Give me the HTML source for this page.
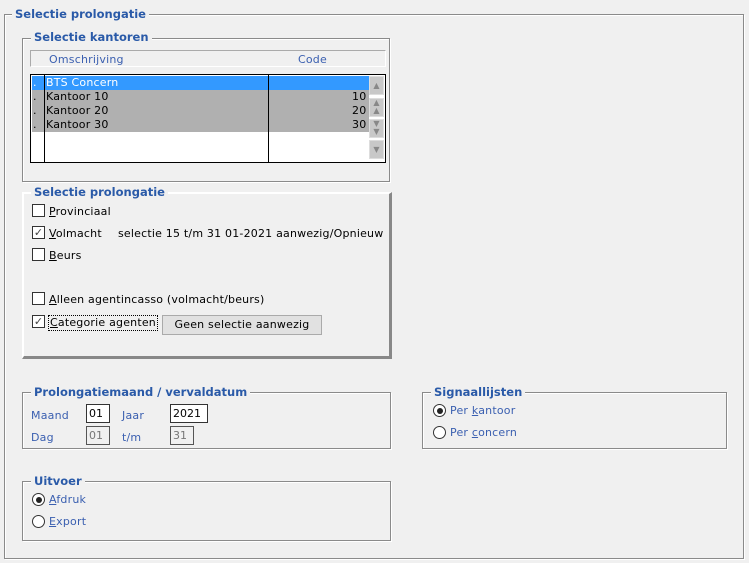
<!DOCTYPE html>
<html><head><meta charset="utf-8"><style>
*{box-sizing:border-box}
body{margin:0;width:749px;height:563px;background:#f0f0f0;font-family:"DejaVu Sans","Liberation Sans",sans-serif;font-size:11px;position:relative;overflow:hidden;color:#000}
.a{position:absolute}
.g{position:absolute;border:1px solid #8a8a8a;box-shadow:inset 1px 1px 0 #fff,1px 1px 0 #fff}
.t{position:absolute;background:#f0f0f0;color:#2a5aa8;font-weight:bold;font-size:11.5px;padding:0 3px;line-height:14px;white-space:nowrap}
.cb{position:absolute;width:13px;height:13px;border:1px solid #333;background:#fff}
.l{position:absolute;white-space:nowrap;line-height:14px;letter-spacing:0.2px;margin-top:1px}
.u{text-decoration:underline}
.blue{color:#3a5fb0}
.rd{position:absolute;width:13px;height:13px;border:1px solid #333;border-radius:50%;background:#fff}
.rd.on::after{content:"";position:absolute;left:2.5px;top:2.5px;width:6px;height:6px;border-radius:50%;background:#222}
.in{position:absolute;height:19px;border:1px solid #333;background:#fff;padding:2px 2px;line-height:13px}
.in.d{border-color:#555;background:#f0f0f0;color:#777}
.sb{position:absolute;left:369px;width:15px;height:19px;background:#c8c8c8;border:1px solid #ddd;color:#888;font-size:8px;text-align:center;line-height:17px}
</style></head><body>
<div class="g" style="left:4px;top:14px;width:740px;height:545px"></div>
<div class="t" style="left:12px;top:7px">Selectie prolongatie</div>

<div class="g" style="left:22px;top:38px;width:368px;height:144px"></div>
<div class="t" style="left:31px;top:30px">Selectie kantoren</div>
<div class="a" style="left:30px;top:50px;width:356px;height:17px;border:1px solid #aaa;border-right-color:#fff;border-bottom-color:#fff"></div>
<div class="l blue" style="left:49px;top:52px">Omschrijving</div>
<div class="l blue" style="left:298px;top:52px">Code</div>
<div class="a" style="left:30px;top:74px;width:356px;height:89px;border:1px solid #000;background:#fff">
 <div class="a" style="left:1px;top:1px;width:337px;height:14px;background:#3399ff"></div>
 <div class="a" style="left:1px;top:15px;width:337px;height:42px;background:#b0b0b0"></div>
 <div class="a" style="left:13px;top:0;width:1px;height:87px;background:#000"></div>
 <div class="a" style="left:237px;top:0;width:1px;height:87px;background:#000"></div>
</div>
<div class="l" style="left:33px;top:75px;color:#fff">.</div>
<div class="l" style="left:46px;top:75px;color:#fff">BTS Concern</div>
<div class="l" style="left:33px;top:89px">.</div><div class="l" style="left:46px;top:89px">Kantoor 10</div><div class="l" style="left:352px;top:89px">10</div>
<div class="l" style="left:33px;top:103px">.</div><div class="l" style="left:46px;top:103px">Kantoor 20</div><div class="l" style="left:352px;top:103px">20</div>
<div class="l" style="left:33px;top:117px">.</div><div class="l" style="left:46px;top:117px">Kantoor 30</div><div class="l" style="left:352px;top:117px">30</div>
<div class="sb" style="top:76px">▲</div>
<div class="sb" style="top:98px;line-height:8px">▲<br>▲</div>
<div class="sb" style="top:119px;line-height:8px">▼<br>▼</div>
<div class="sb" style="top:140px">▼</div>

<div class="a" style="left:22px;top:192px;width:370px;height:167px;border-top:2px solid #fff;border-left:2px solid #fff;border-right:3px solid #888;border-bottom:3px solid #888"></div>
<div class="t" style="left:31px;top:185px">Selectie prolongatie</div>
<div class="cb" style="left:32px;top:204px"></div><div class="l" style="left:49px;top:204px"><span class="u">P</span>rovinciaal</div>
<div class="cb" style="left:32px;top:226px;font-size:11px;line-height:11px;color:#444;text-align:center">✓</div><div class="l" style="left:49px;top:226px"><span class="u">V</span>olmacht</div>
<div class="l" style="left:118px;top:226px">selectie 15 t/m 31 01-2021 aanwezig/Opnieuw</div>
<div class="cb" style="left:32px;top:248px"></div><div class="l" style="left:49px;top:248px"><span class="u">B</span>eurs</div>
<div class="cb" style="left:32px;top:292px"></div><div class="l" style="left:49px;top:292px"><span class="u">A</span>lleen agentincasso (volmacht/beurs)</div>
<div class="cb" style="left:32px;top:315px;font-size:11px;line-height:11px;color:#444;text-align:center">✓</div><div class="l" style="left:48px;top:314px;border:1px dotted #000;padding:0 1px"><span class="u">C</span>ategorie agenten</div>
<div class="a" style="left:162px;top:315px;width:160px;height:20px;border:1px solid #aaa;background:#e1e1e1;text-align:center;line-height:18px;letter-spacing:0.2px">Geen selectie aanwezig</div>

<div class="g" style="left:22px;top:392px;width:369px;height:57px"></div>
<div class="t" style="left:31px;top:385px">Prolongatiemaand / vervaldatum</div>
<div class="l blue" style="left:31px;top:408px">Maand</div>
<div class="in" style="left:86px;top:404px;width:24px">01</div>
<div class="l blue" style="left:122px;top:408px">Jaar</div>
<div class="in" style="left:170px;top:404px;width:38px">2021</div>
<div class="l blue" style="left:31px;top:430px">Dag</div>
<div class="in d" style="left:86px;top:426px;width:24px">01</div>
<div class="l blue" style="left:122px;top:430px">t/m</div>
<div class="in d" style="left:170px;top:426px;width:24px">31</div>

<div class="g" style="left:22px;top:481px;width:369px;height:60px"></div>
<div class="t" style="left:31px;top:474px">Uitvoer</div>
<div class="rd on" style="left:32px;top:493px"></div><div class="l blue" style="left:49px;top:492px"><span class="u">A</span>fdruk</div>
<div class="rd" style="left:32px;top:515px"></div><div class="l blue" style="left:49px;top:514px"><span class="u">E</span>xport</div>

<div class="g" style="left:422px;top:392px;width:305px;height:57px"></div>
<div class="t" style="left:431px;top:385px">Signaallijsten</div>
<div class="rd on" style="left:433px;top:404px"></div><div class="l blue" style="left:450px;top:403px">Per <span class="u">k</span>antoor</div>
<div class="rd" style="left:433px;top:426px"></div><div class="l blue" style="left:450px;top:425px">Per <span class="u">c</span>oncern</div>
</body></html>
